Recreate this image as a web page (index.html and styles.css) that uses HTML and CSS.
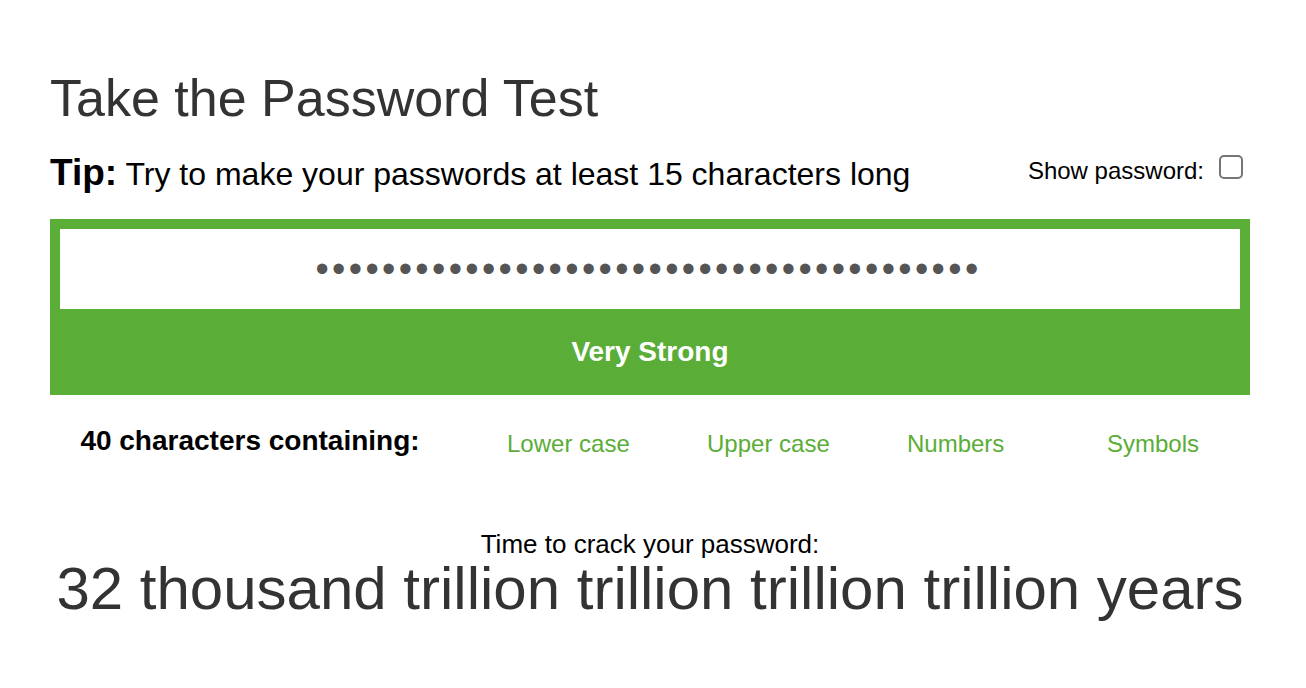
FILE: index.html
```html
<!DOCTYPE html>
<html lang="en">
<head>
<meta charset="utf-8">
<title>Take the Password Test</title>
<link rel="stylesheet" href="styles.css">
</head>
<body>
<main class="page">
  <h1 class="title">Take the Password Test</h1>
  <div class="tip-row">
    <p class="tip"><strong class="tip-label">Tip:</strong> Try to make your passwords at least 15 characters long</p>
    <label class="show">Show password: <span class="checkbox"></span></label>
  </div>
  <section class="meter">
    <div class="field"><span class="dots">••••••••••••••••••••••••••••••••••••••••</span></div>
    <div class="strength">Very Strong</div>
  </section>
  <div class="criteria">
    <div class="count">40 characters containing:</div>
    <div class="crit">Lower case</div>
    <div class="crit">Upper case</div>
    <div class="crit">Numbers</div>
    <div class="crit">Symbols</div>
  </div>
  <div class="crack">
    <div class="crack-label">Time to crack your password:</div>
    <div class="crack-time">32 thousand trillion trillion trillion trillion years</div>
  </div>
</main>
</body>
</html>
```

FILE: styles.css
```css
* { box-sizing: border-box; }
html, body { margin: 0; padding: 0; background: #fff; }
body { font-family: "Liberation Sans", Arial, Helvetica, sans-serif; color: #000; }

.page {
  width: 1200px;
  margin: 0 0 0 50px;
  padding-top: 68px;
}

.title {
  margin: 0;
  font-size: 52px;
  line-height: 60px;
  font-weight: normal;
  color: #333;
}

.tip-row {
  display: flex;
  justify-content: space-between;
  align-items: flex-start;
  margin-top: 23px;
  height: 44px;
}
.tip {
  margin: 0;
  font-size: 32px;
  line-height: 44px;
}
.tip-label { font-size: 37px; font-weight: bold; }

.show {
  display: flex;
  align-items: flex-start;
  gap: 15px;
  font-size: 24px;
  line-height: 28px;
  margin-top: 6px;
  margin-right: 7px;
}
.checkbox {
  display: block;
  width: 24px;
  height: 24px;
  margin-top: -2px;
  border: 2px solid #767676;
  border-radius: 5px;
  background: #fff;
}

.meter {
  margin-top: 24px;
  background: #5aad37;
  padding: 10px 10px 0;
}
.field {
  height: 80px;
  background: #fff;
  display: flex;
  align-items: center;
  justify-content: center;
}
.dots {
  font-size: 38px;
  color: #555;
  letter-spacing: 3.35px;
  line-height: 1;
  margin-left: -3px;
}
.strength {
  height: 86px;
  display: flex;
  align-items: center;
  justify-content: center;
  color: #fff;
  font-weight: bold;
  font-size: 28px;
}

.criteria {
  display: grid;
  grid-template-columns: 400px repeat(4, 200px);
  align-items: baseline;
  padding-top: 30px;
  line-height: 32px;
}
.count {
  text-align: center;
  font-weight: bold;
  font-size: 28px;
}
.crit {
  padding-left: 57px;
  color: #5aad37;
  font-size: 24px;
  transform: translateY(2px);
}

.crack {
  margin-top: 71px;
  text-align: center;
}
.crack-label {
  font-size: 26px;
  line-height: 30px;
}
.crack-time {
  margin-top: -2px;
  font-size: 60px;
  line-height: 64px;
  color: #333;
}
```
